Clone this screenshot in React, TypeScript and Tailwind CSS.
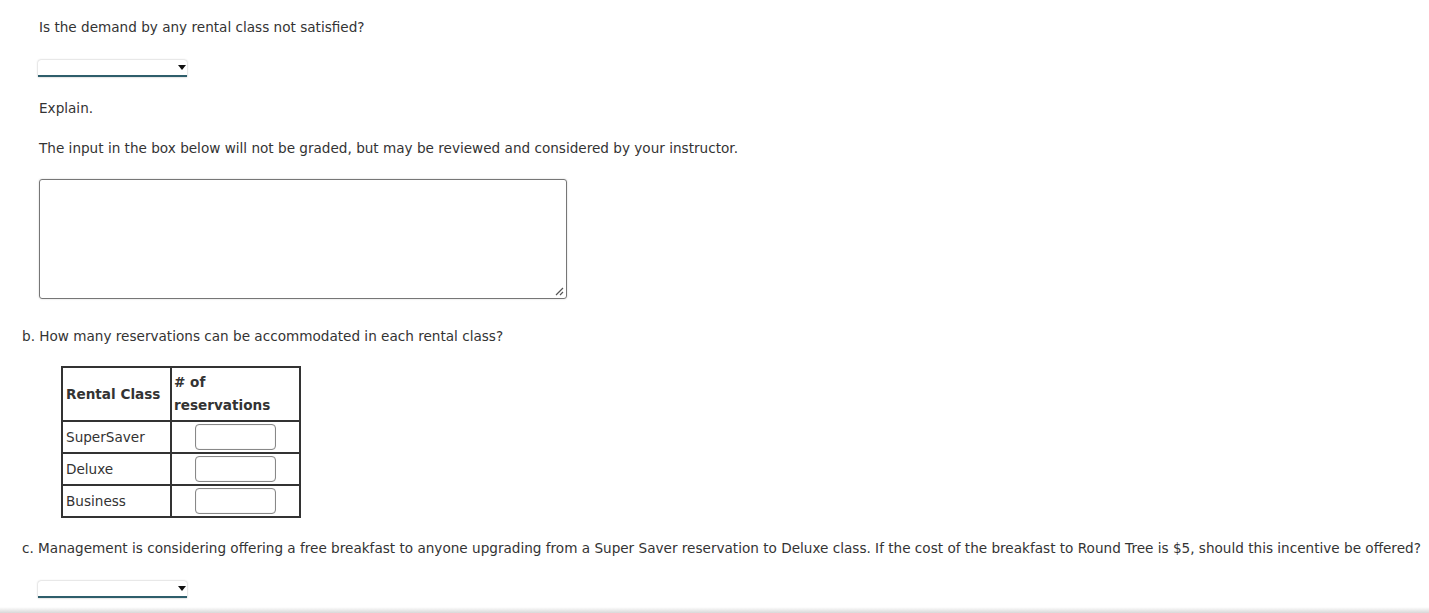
import React from "react";

function Select() {
  return (
    <div className="relative w-[149px] h-[17px] bg-white rounded-t-[3px] shadow-[0_0_2px_rgba(0,0,0,0.35)] border-b-2 border-[#2e5e6b]">
      <svg className="absolute right-[1px] top-[5px]" width="8" height="5" viewBox="0 0 8 5">
        <path d="M0 0 L8 0 L4 5 Z" fill="#111" />
      </svg>
    </div>
  );
}

function Cell({ children, bold }: { children?: React.ReactNode; bold?: boolean }) {
  return <td className={`border-2 border-[#333] px-[3px] ${bold ? "font-bold" : ""}`}>{children}</td>;
}

function Inp() {
  return <div className="mx-auto w-[81px] h-[26px] rounded-[4px] border border-[#888] shadow-[inset_0_0_1px_rgba(0,0,0,0.3)] bg-white" />;
}

export default function App() {
  return (
    <div className="relative w-[1429px] h-[613px] bg-white text-[#333] text-[13.6px] overflow-hidden" style={{ fontFamily: "'DejaVu Sans', Verdana, sans-serif" }}>
      <div className="pl-[22px] pt-[17px]">
        <div className="pl-[17px]">
          <p className="leading-[20px]">Is the demand by any rental class not satisfied?</p>
          <div className="mt-[23px] -ml-[1px]"><Select /></div>
          <p className="mt-[21px] leading-[20px]">Explain.</p>
          <p className="mt-[20px] leading-[20px]">The input in the box below will not be graded, but may be reviewed and considered by your instructor.</p>
          <div className="mt-[21px] relative w-[528px] h-[120px] border border-[#767676] rounded-[3px] shadow-[0_0_2px_rgba(0,0,0,0.2)]">
            <svg className="absolute right-[2px] bottom-[2px]" width="10" height="10" viewBox="0 0 10 10">
              <path d="M9 2 L2 9 M9 6 L6 9" stroke="#555" strokeWidth="1.2" />
            </svg>
          </div>
        </div>
        <p className="mt-[27px] leading-[20px]">b. How many reservations can be accommodated in each rental class?</p>
        <table className="mt-[20px] ml-[39px] border-collapse">
          <tbody>
            <tr className="h-[54px]">
              <td className="border-2 border-[#333] px-[3px] font-bold w-[109px]">Rental Class</td>
              <td className="border-2 border-[#333] px-[2px] font-bold w-[129px] leading-[23px]"># of<br />reservations</td>
            </tr>
            {["SuperSaver", "Deluxe", "Business"].map((r) => (
              <tr key={r} className="h-[32px]">
                <Cell>{r}</Cell>
                <td className="border-2 border-[#333]"><Inp /></td>
              </tr>
            ))}
          </tbody>
        </table>
        <p className="mt-[20px] leading-[20px] whitespace-nowrap">c. Management is considering offering a free breakfast to anyone upgrading from a Super Saver reservation to Deluxe class. If the cost of the breakfast to Round Tree is $5, should this incentive be offered?</p>
        <div className="mt-[23px] ml-[16px]"><Select /></div>
      </div>
      <div className="absolute left-0 right-0 bottom-0 h-[6px] bg-gradient-to-b from-white to-[#d8d8d8]" />
    </div>
  );
}
